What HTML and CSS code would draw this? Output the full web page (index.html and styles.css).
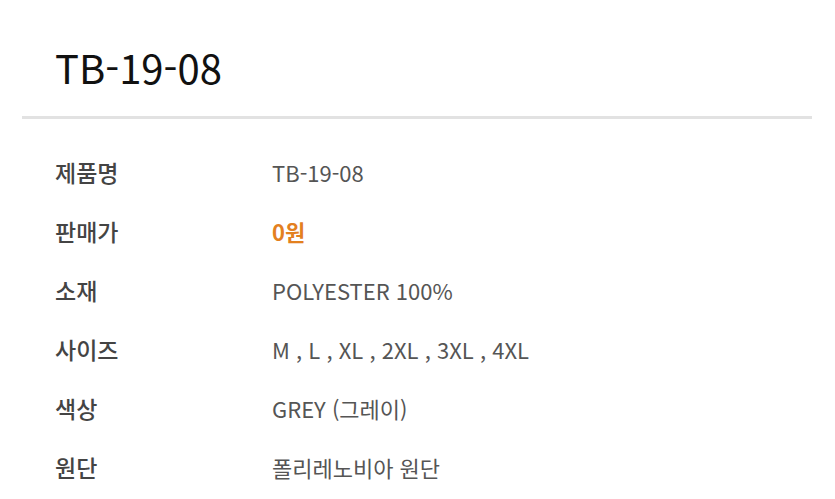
FILE: index.html
```html
<!DOCTYPE html>
<html lang="ko">
<head>
<meta charset="utf-8">
<link rel="stylesheet" href="styles.css">
</head>
<body>
<div class="page">
  <div class="head">
    <h1 class="title">TB-19-08</h1>
  </div>
  <div class="divider"></div>
  <div class="specs">
    <div class="row"><div class="label">제품명</div><div class="value">TB-19-08</div></div>
    <div class="row"><div class="label">판매가</div><div class="value price">0원</div></div>
    <div class="row"><div class="label">소재</div><div class="value">POLYESTER 100%</div></div>
    <div class="row"><div class="label">사이즈</div><div class="value">M , L , XL , 2XL , 3XL , 4XL</div></div>
    <div class="row"><div class="label">색상</div><div class="value">GREY (그레이)</div></div>
    <div class="row"><div class="label">원단</div><div class="value">폴리레노비아 원단</div></div>
  </div>
</div>
</body>
</html>
```

FILE: styles.css
```css
* { box-sizing: border-box; }
html, body { margin: 0; padding: 0; background: #fff; }
body {
  font-family: "Noto Sans CJK KR", "Noto Sans", sans-serif;
  width: 835px;
  height: 499px;
  overflow: hidden;
}
.page { padding: 0 23px 0 22px; }
.head {
  height: 116px;
  padding: 39px 0 0 33px;
}
.title {
  margin: 0;
  font-size: 40px;
  line-height: 56px;
  font-weight: 400;
  color: #111;
}
.divider {
  height: 3px;
  background: #e2e2e2;
}
.specs {
  padding: 23px 0 0 33px;
}
.row {
  display: flex;
  align-items: center;
  height: 59px;
}
.label {
  width: 217px;
  flex: none;
  font-size: 23px;
  font-weight: 500;
  color: #444;
}
.value {
  font-size: 22px;
  font-weight: 400;
  color: #555;
}
.price {
  color: #e3801f;
  font-weight: 700;
}
```
